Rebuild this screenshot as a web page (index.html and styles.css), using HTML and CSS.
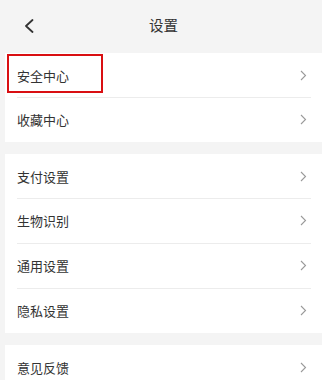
FILE: index.html
```html
<!DOCTYPE html>
<html lang="zh-CN">
<head>
<meta charset="utf-8">
<title>设置</title>
<link rel="stylesheet" href="styles.css">
</head>
<body>
<div class="page">
  <header class="topbar">
    <span class="back">
      <svg width="10" height="14" viewBox="0 0 10 14"><path d="M8.5 1 L2 7 L8.5 13" fill="none" stroke="#333" stroke-width="1.8" stroke-linecap="round" stroke-linejoin="round"/></svg>
    </span>
    <h1 class="title">设置</h1>
  </header>
  <main class="content">
    <ul class="group">
      <li class="row highlighted"><span class="label">安全中心</span><span class="arrow"><svg width="7" height="11" viewBox="0 0 7 11"><path d="M1 1 L5.5 5.5 L1 10" fill="none" stroke="#9a9a9a" stroke-width="1.1"/></svg></span><span class="mark"></span></li>
      <li class="row"><span class="label">收藏中心</span><span class="arrow"><svg width="7" height="11" viewBox="0 0 7 11"><path d="M1 1 L5.5 5.5 L1 10" fill="none" stroke="#9a9a9a" stroke-width="1.1"/></svg></span></li>
    </ul>
    <ul class="group">
      <li class="row"><span class="label">支付设置</span><span class="arrow"><svg width="7" height="11" viewBox="0 0 7 11"><path d="M1 1 L5.5 5.5 L1 10" fill="none" stroke="#9a9a9a" stroke-width="1.1"/></svg></span></li>
      <li class="row"><span class="label">生物识别</span><span class="arrow"><svg width="7" height="11" viewBox="0 0 7 11"><path d="M1 1 L5.5 5.5 L1 10" fill="none" stroke="#9a9a9a" stroke-width="1.1"/></svg></span></li>
      <li class="row"><span class="label">通用设置</span><span class="arrow"><svg width="7" height="11" viewBox="0 0 7 11"><path d="M1 1 L5.5 5.5 L1 10" fill="none" stroke="#9a9a9a" stroke-width="1.1"/></svg></span></li>
      <li class="row"><span class="label">隐私设置</span><span class="arrow"><svg width="7" height="11" viewBox="0 0 7 11"><path d="M1 1 L5.5 5.5 L1 10" fill="none" stroke="#9a9a9a" stroke-width="1.1"/></svg></span></li>
    </ul>
    <ul class="group">
      <li class="row"><span class="label">意见反馈</span><span class="arrow"><svg width="7" height="11" viewBox="0 0 7 11"><path d="M1 1 L5.5 5.5 L1 10" fill="none" stroke="#9a9a9a" stroke-width="1.1"/></svg></span></li>
    </ul>
  </main>
</div>
</body>
</html>
```
FILE: styles.css
```css
* { box-sizing: border-box; }
html, body {
  margin: 0;
  padding: 0;
  background: #f4f4f4;
  font-family: "Noto Sans CJK SC", "Noto Sans", sans-serif;
  color: #333;
}
.page {
  width: 322px;
  height: 380px;
  overflow: hidden;
}
.topbar {
  height: 53px;
  display: flex;
  align-items: center;
  position: relative;
  padding-left: 24px;
}
.back {
  display: flex;
  width: 10px;
  height: 14px;
  margin-top: -1px;
}
.title {
  position: absolute;
  left: 5px;
  right: 0;
  top: 0;
  margin: 0;
  text-align: center;
  font-size: 14.5px;
  font-weight: normal;
  line-height: 50px;
  color: #333;
}
.content {
  margin-left: 5px;
  display: flex;
  flex-direction: column;
  gap: 12px;
}
.group {
  list-style: none;
  margin: 0;
  padding: 0;
  background: #fff;
}
.row {
  position: relative;
  height: 45px;
  display: flex;
  align-items: center;
  justify-content: space-between;
  padding: 0 15px 0 12px;
  font-size: 13px;
  color: #333;
}
.row + .row::before {
  content: "";
  position: absolute;
  top: 0;
  left: 12px;
  right: 11px;
  height: 1px;
  background: #ececec;
}
.group .row:first-child { height: 44px; }
.arrow {
  display: flex;
  width: 7px;
  height: 11px;
}
.mark {
  position: absolute;
  left: 2px;
  top: 1px;
  width: 96px;
  height: 39px;
  border: 2px solid #d90f12;
}
```
